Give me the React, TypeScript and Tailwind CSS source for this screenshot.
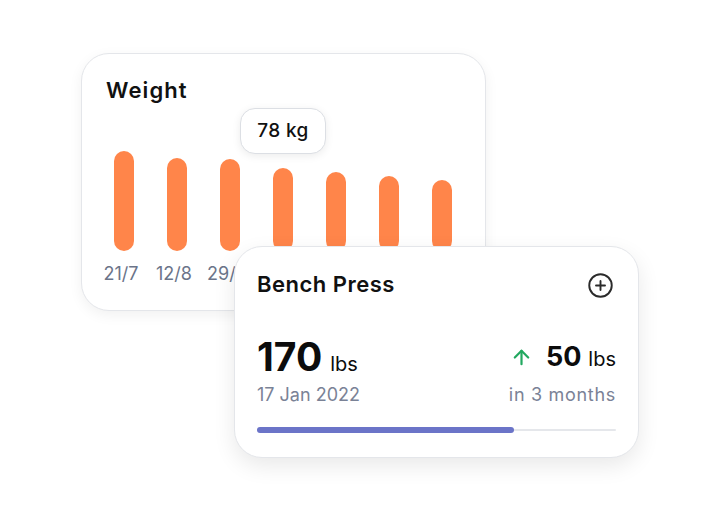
import { ArrowUp, CirclePlus } from "lucide-react";

const bars = [
  { label: "21/7", h: 100 },
  { label: "12/8", h: 93 },
  { label: "29/8", h: 92 },
  { label: "5/9", h: 83 },
  { label: "20/9", h: 79 },
  { label: "4/10", h: 75 },
  { label: "18/10", h: 71 },
];

function WeightCard() {
  return (
    <div className="relative w-[405px] h-[258px] rounded-[28px] border border-[#e4e6ea] bg-white shadow-[0_4px_14px_rgba(0,0,0,0.06)]">
      <h3 className="pl-[24px] pt-[21px] text-[22px] leading-[30px] font-semibold text-[#111] tracking-[1.1px]">
        Weight
      </h3>

      {/* bar chart */}
      <div className="flex pl-[15px] mt-[46px]">
        {bars.map((b) => (
          <div key={b.label} className="w-[53px] flex flex-col items-center">
            <div className="h-[100px] flex items-end">
              <div
                className="w-[20px] rounded-full bg-[#ff854a]"
                style={{ height: b.h }}
              />
            </div>
            <span className="mt-[11px] mr-[5px] text-[18px] leading-[24px] text-[#6b7489]">
              {b.label}
            </span>
          </div>
        ))}
      </div>

      {/* tooltip */}
      <div className="absolute left-[158px] top-[54px] w-[86px] h-[46px] rounded-[15px] border border-[#dcdfe4] bg-white shadow-[0_2px_8px_rgba(0,0,0,0.08)] flex items-center justify-center text-[19px] font-medium text-[#111] tracking-[0.4px]">
        78 kg
      </div>
    </div>
  );
}

function BenchCard() {
  return (
    <div className="ml-[153px] -mt-[65px] relative w-[405px] h-[212px] rounded-[28px] border border-[#e4e6ea] bg-white shadow-[0_8px_22px_rgba(0,0,0,0.09)] px-[22px] pt-[22px]">
      <div className="flex items-center justify-between">
        <h3 className="text-[22px] leading-[30px] font-semibold text-[#111] tracking-[0.5px]">
          Bench Press
        </h3>
        <CirclePlus size={27} strokeWidth={1.7} className="text-[#2b2b2b] mr-[2px] mt-[3px]" />
      </div>

      <div className="mt-[36px] flex justify-between items-end">
        <div>
          <div className="flex items-baseline gap-[8px] text-[#0c0c0c]">
            <span className="text-[39px] leading-[44px] font-bold">170</span>
            <span className="text-[20px]">lbs</span>
          </div>
          <div className="mt-[4px] text-[18px] leading-[24px] text-[#7a8296]">
            17 Jan 2022
          </div>
        </div>
        <div className="flex flex-col items-end">
          <div className="flex items-baseline text-[#0c0c0c]">
            <ArrowUp size={23} strokeWidth={2.3} className="text-[#22a860] self-center mr-[13px]" />
            <span className="text-[27px] leading-[44px] font-bold">50</span>
            <span className="text-[20px] ml-[7px]">lbs</span>
          </div>
          <div className="mt-[4px] text-[18px] leading-[24px] text-[#7a8296] tracking-[0.7px]">
            in 3 months
          </div>
        </div>
      </div>

      <div className="mt-[20px] relative h-[6px] flex items-center">
        <div className="w-full h-[2px] bg-[#e5e7eb] rounded-full" />
        <div className="absolute left-0 top-0 h-[6px] w-[257px] rounded-full bg-[#6b74c8]" />
      </div>
    </div>
  );
}

export default function App() {
  return (
    <div className="w-[720px] h-[510px] bg-white pt-[53px] pl-[81px] overflow-hidden font-['Inter',sans-serif]">
      <WeightCard />
      <BenchCard />
    </div>
  );
}
